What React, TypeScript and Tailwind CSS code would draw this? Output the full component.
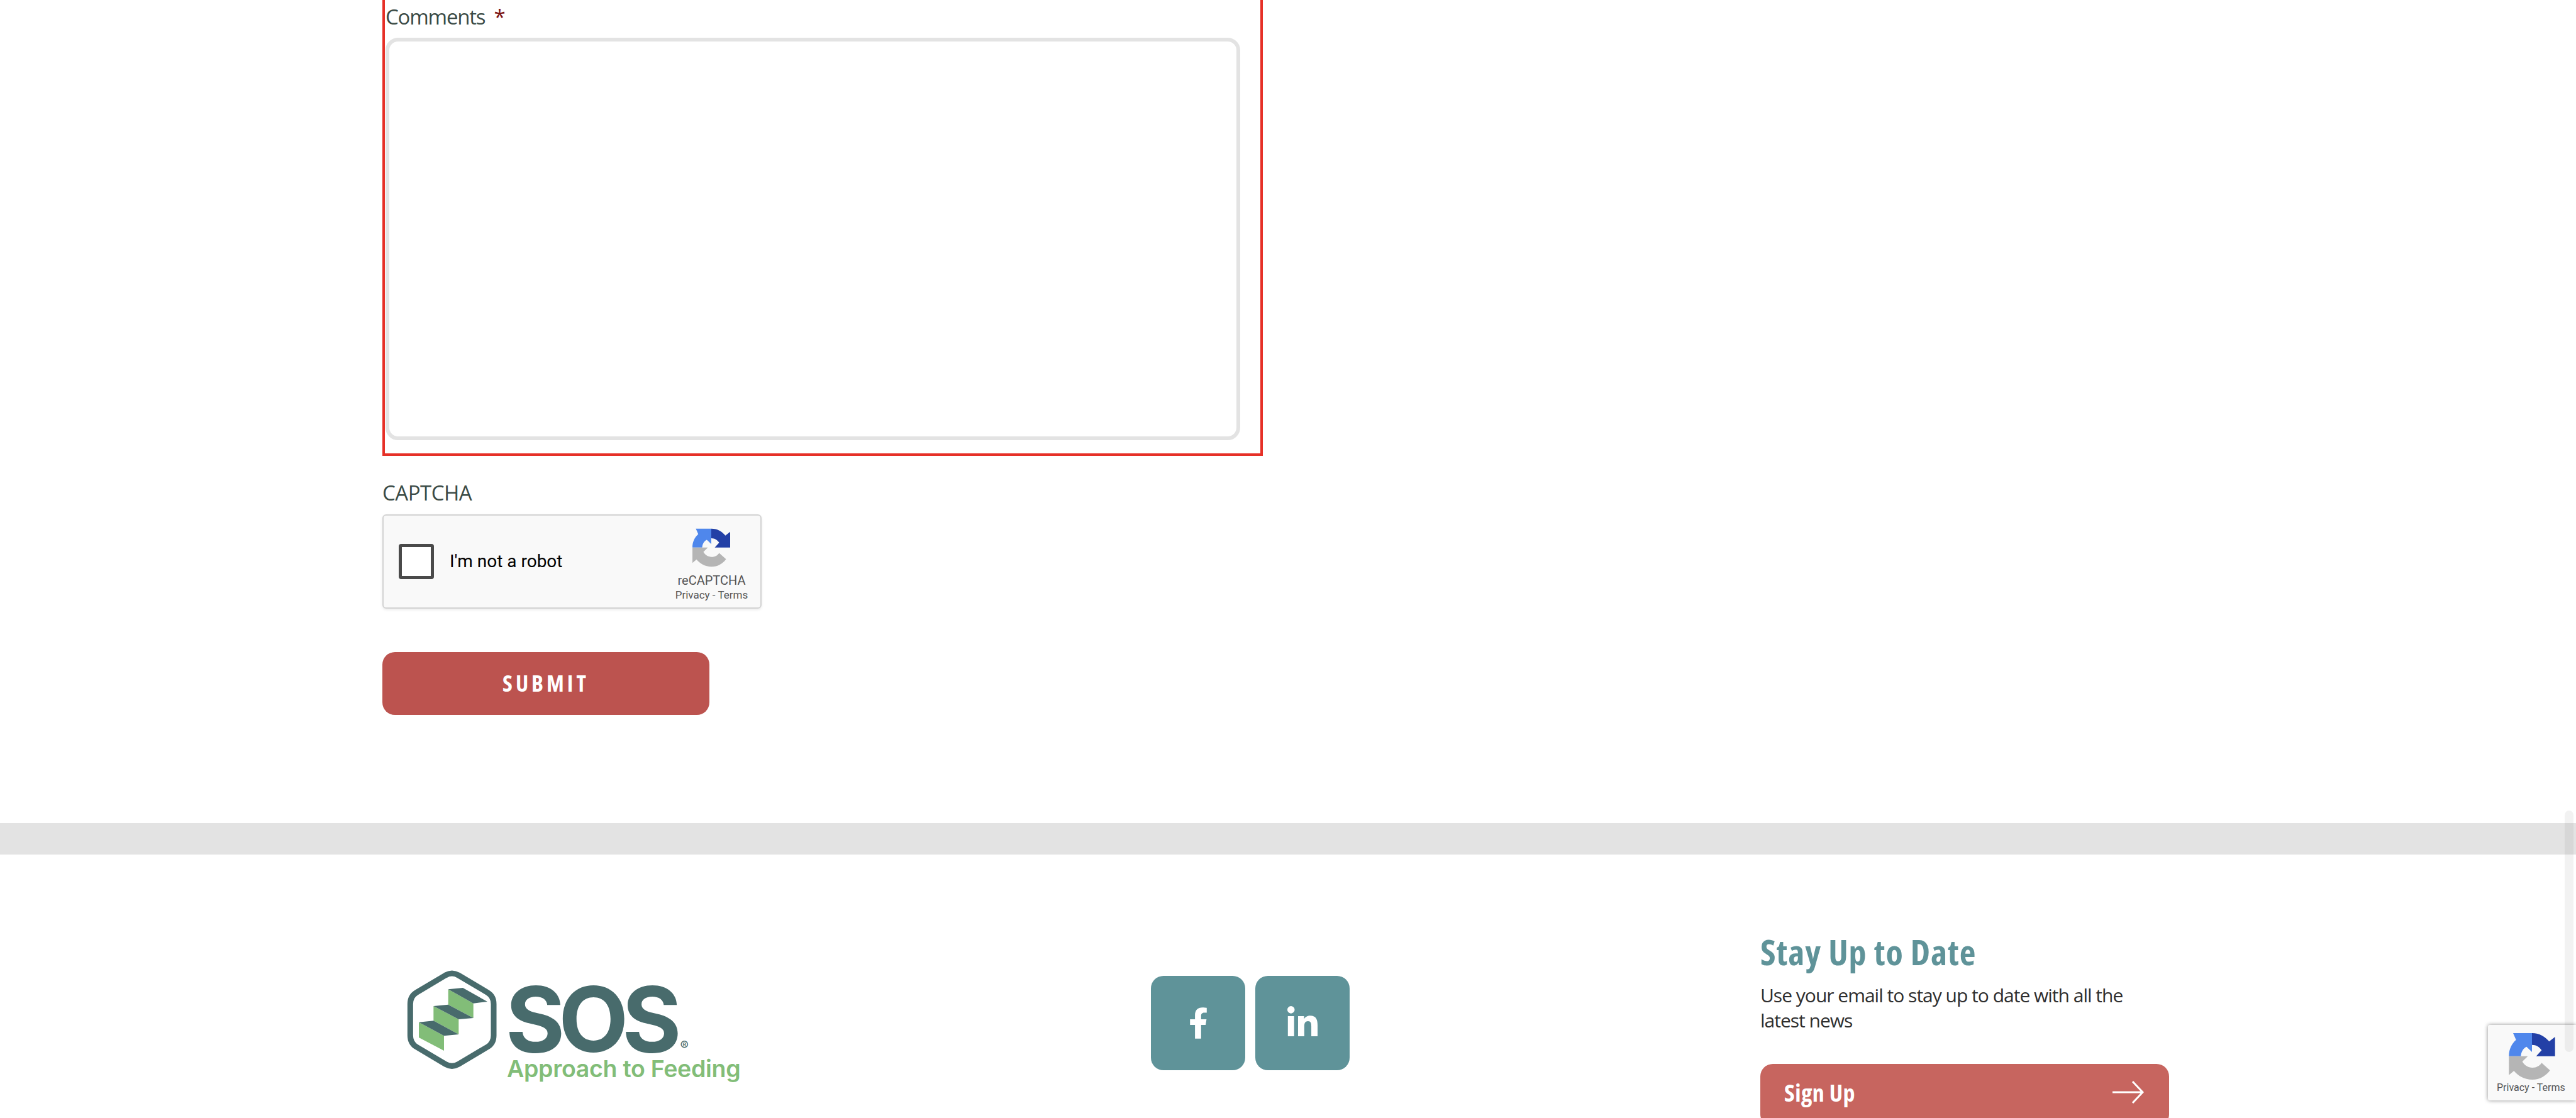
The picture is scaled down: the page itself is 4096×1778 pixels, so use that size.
import { FaFacebookF, FaLinkedinIn } from "react-icons/fa";

function RecaptchaIcon({ className }: { className: string }) {
  return (
    <svg viewBox="58 40 220 222" className={className}>
      <path
        d="M58 150C58 115 72 90 92 72L78 40L168 40L168 130L142 105C126 112 116 130 115 150Z"
        fill="#4f87ec"
      />
      <path
        d="M168 40C205 40 232 58 250 80L278 58L278 150L188 150L214 122C204 106 188 96 168 96Z"
        fill="#2340a6"
      />
      <path
        d="M58 150L148 150L122 176C132 194 150 205 170 205C190 205 205 196 214 182L254 218C234 245 205 262 170 262C130 262 100 242 82 220L58 240Z"
        fill="#b5b5b5"
      />
    </svg>
  );
}

function StairsMark() {
  return (
    <svg viewBox="0 0 540 540" className="h-[180px] w-[180px]">
      <path
        d="M205 48Q236 30 267 48L405 130Q435 148 435 185L435 335Q435 372 405 390L267 472Q236 490 205 472L67 390Q37 372 37 335L37 185Q37 148 67 130Z"
        fill="none"
        stroke="#486b6c"
        strokeWidth="27"
      />
      <polygon points="218,115 338,182 338,252 218,188" fill="#82bd78" />
      <polygon points="148,195 268,258 268,330 148,265" fill="#82bd78" />
      <polygon points="78,272 198,337 198,408 78,345" fill="#82bd78" />
      <polygon points="218,115 288,108 405,174 338,182" fill="#486b6c" />
      <polygon points="148,195 218,188 338,252 268,258" fill="#486b6c" />
      <polygon points="78,272 148,265 268,330 198,337" fill="#486b6c" />
    </svg>
  );
}

export default function App() {
  return (
    <div className="relative h-[1778px] overflow-hidden bg-white font-['Open_Sans',sans-serif] [font-stretch:88%]">
      {/* Form */}
      <section className="h-[1309px] pl-[608px]">
        <div className="h-[725px] w-[1400px] border-x-4 border-b-4 border-[#e63027] pl-px">
          <div className="flex h-[60px] items-start gap-[14px] text-[33px] leading-[54px] text-[#3a4a45]">
            <span className="tracking-[-1.2px]">Comments</span>
            <span className="text-[#7a1010]">*</span>
          </div>
          <div className="h-[640px] w-[1359px] rounded-[20px] border-[6px] border-[#e3e3e3] bg-white" />
        </div>

        <div className="mt-[32px] pb-[8px] text-[33px] leading-[53px] tracking-[-0.5px] text-[#3a4a45] [font-stretch:100%]">CAPTCHA</div>

        <div className="flex h-[150px] w-[603px] items-center rounded-[6px] border-2 border-[#d3d3d3] bg-[#f9f9f9] pl-6 shadow-[0_2px_4px_rgba(0,0,0,0.08)] [font-stretch:100%]">
          <div className="h-14 w-14 rounded-[4px] border-[5px] border-[#4a4a4a] bg-white" />
          <span className="ml-[25px] font-['Roboto',sans-serif] text-[28px] text-black">I'm not a robot</span>
          <div className="ml-[179px] flex w-[116px] flex-col items-center pt-[10px] font-['Roboto',sans-serif] text-[#555]">
            <RecaptchaIcon className="h-[62px] w-[60px]" />
            <span className="mt-[9px] text-[20px] leading-[24px]">reCAPTCHA</span>
            <span className="text-[17px] leading-[22px] whitespace-nowrap">Privacy - Terms</span>
          </div>
        </div>

        <button className="mt-[69px] flex h-[100px] w-[520px] items-center justify-center rounded-[20px] bg-[#bc534f] text-[36px] font-bold tracking-[5px] text-white [font-stretch:75%]">
          SUBMIT
        </button>
      </section>

      <div className="h-[50px] bg-[#e3e3e3]" />

      {/* Footer */}
      <footer className="flex pl-[640px]">
        <div className="flex w-[1190px] pt-[176px]">
          <StairsMark />
          <div className="ml-[-16px] flex flex-col pt-[30px] font-['Inter',sans-serif] [font-stretch:100%]">
            <div className="flex items-end">
              <span className="text-[144px] leading-[112px] font-bold tracking-[-10px] text-[#486b6c]">SOS</span>
              <span className="mb-[2px] ml-[8px] text-[20px] leading-[24px] text-[#486b6c]">®</span>
            </div>
            <span className="ml-[2px] text-[37.5px] leading-[46px] font-semibold tracking-[-0.3px] text-[#82bd78]">
              Approach to Feeding
            </span>
          </div>
        </div>

        <div className="flex w-[969px] gap-4 pt-[193px]">
          <div className="flex h-[150px] w-[150px] items-center justify-center rounded-[20px] bg-[#5f9399]">
            <FaFacebookF className="h-[50px] w-[31px] text-white" />
          </div>
          <div className="flex h-[150px] w-[150px] items-center justify-center rounded-[20px] bg-[#5f9399]">
            <FaLinkedinIn className="h-[55px] w-[48px] text-white" />
          </div>
        </div>

        <div className="w-[650px] pt-[120px]">
          <h3 className="text-[56px] leading-[68px] font-bold tracking-[1px] text-[#5f9399] [font-stretch:75%]">Stay Up to Date</h3>
          <p className="mt-[16px] w-[600px] text-[30px] leading-[40px] tracking-[-1px] text-[#2e2e2e]">
            Use your email to stay up to date with all the latest news
          </p>
          <div className="mt-[49px] flex h-[100px] items-center justify-between rounded-[20px] bg-[#c7655f] pr-[40px] pb-[10px] pl-[38px] [font-stretch:75%]">
            <span className="text-[38px] font-bold tracking-[0.5px] text-white">Sign Up</span>
            <svg viewBox="0 0 50 36" className="h-[36px] w-[50px]" fill="none" stroke="white" strokeWidth="3">
              <path d="M0 18H48M32 1L48 18L32 35" />
            </svg>
          </div>
        </div>
      </footer>

      {/* reCAPTCHA badge */}
      <div className="absolute top-[1630px] left-[3956px] flex h-[120px] w-[140px] flex-col items-start rounded-l-[3px] bg-[#f9f9f9] pt-[13px] pl-[33px] font-['Roboto',sans-serif] shadow-[0_0_6px_rgba(0,0,0,0.45)] [font-stretch:100%]">
        <RecaptchaIcon className="h-[74px] w-[74px]" />
        <span className="mt-[3px] ml-[-19px] text-[16px] leading-[20px] whitespace-nowrap text-[#555]">Privacy - Terms</span>
      </div>

      {/* Scrollbar */}
      <div className="absolute top-[1289px] left-[4078px] h-[384px] w-[14px] rounded-full bg-black/5" />
    </div>
  );
}
